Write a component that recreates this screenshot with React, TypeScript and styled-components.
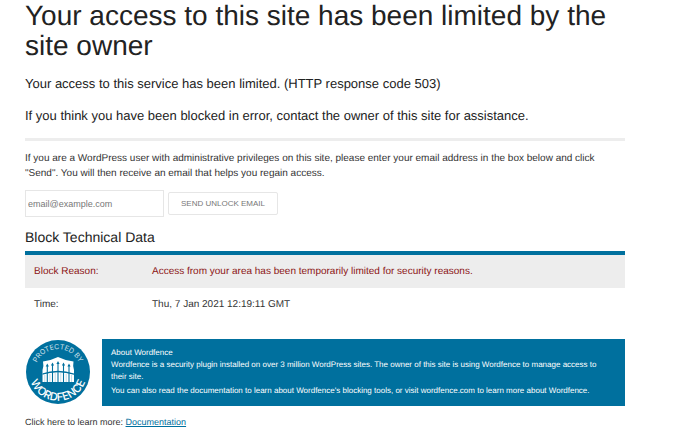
import React from "react";
import styled, { createGlobalStyle } from "styled-components";

const GlobalStyle = createGlobalStyle`
  *, *::before, *::after { box-sizing: border-box; }
  body {
    margin: 0;
    background: #fff;
    color: #333;
    font-family: "Liberation Sans", Arial, Helvetica, sans-serif;
    font-size: 10px;
    line-height: 15px;
    text-rendering: geometricPrecision;
  }
`;

const Page = styled.main`
  max-width: 650px;
  padding: 1px 25px 0;
`;

const Title = styled.h1`
  margin: 0;
  color: #222;
  font-size: 28px;
  font-weight: 400;
  line-height: 30px;
`;

const Lead = styled.p`
  margin: 14px 0 0;
  color: #222;
  font-size: 13px;
  line-height: 18px;
`;

const Divider = styled.hr`
  height: 3px;
  margin: 13px 0 10px;
  border: 0;
  background: #ededed;
`;

const Copy = styled.p`
  margin: 0;
`;

const UnlockForm = styled.form`
  display: flex;
  align-items: center;
  gap: 4px;
  margin-top: 9px;
`;

const EmailInput = styled.input`
  width: 139px;
  height: 27px;
  padding: 0 2px;
  border: 1px solid #e6e6e6;
  background: #fff;
  color: #333;
  font: inherit;
  font-size: 9px;
  &::placeholder { color: #777; opacity: 1; }
`;

const SendButton = styled.button`
  height: 23px;
  padding: 0 12px;
  border: 1px solid #e6e6e6;
  border-radius: 2px;
  background: #fff;
  color: #777;
  font: inherit;
  font-size: 8px;
  text-transform: uppercase;
`;

const SectionTitle = styled.h2`
  margin: 11px 0 5px;
  color: #222;
  font-size: 14px;
  font-weight: 400;
  line-height: 18px;
`;

const DataTable = styled.table`
  width: 100%;
  border-top: 4px solid #00709e;
  border-collapse: collapse;
`;

const DataRow = styled.tr<{ $alert?: boolean }>`
  background: ${(p) => (p.$alert ? "#ededed" : "#fff")};
  color: ${(p) => (p.$alert ? "#8c1515" : "#333")};
  th, td {
    padding: 9px;
    font-weight: 400;
    text-align: left;
  }
  th { width: 118px; }
`;

const About = styled.section`
  display: flex;
  align-items: flex-start;
  gap: 11px;
  margin-top: 18px;
`;

const Seal = styled.svg`
  flex: none;
  width: 66px;
  height: 66px;
`;

const AboutPanel = styled.div`
  flex: 1;
  padding: 8px 16px 7px 9px;
  background: #00709e;
  color: #fff;
  font-size: 8px;
  line-height: 12px;
`;

const AboutTitle = styled.h3`
  margin: 0;
  font-size: 8px;
  font-weight: 400;
`;

const AboutText = styled.p`
  margin: 0 0 2px;
`;

const Footer = styled.p`
  margin: 9px 0 0;
  font-size: 9px;
  a { color: #00709e; }
`;

function WordfenceSeal() {
  return (
    <Seal viewBox="0 0 66 66" role="img" aria-label="Protected by Wordfence">
      <defs>
        <path id="seal-top" d="M 13 44.4 A 23 23 0 1 1 53 44.4" />
        <path id="seal-bottom" d="M 5.1 25 A 29 29 0 1 0 60.9 25" />
        <clipPath id="gate">
          <path d="M18 22.5 Q26 21.5 33 18 Q40 21.5 48.5 22.5 Q47.6 27 49 31 V43 H17.5 V31 Q19 27 18 22.5Z" />
        </clipPath>
      </defs>
      <circle cx="33" cy="33" r="32" fill="#00709e" />
      <g clipPath="url(#gate)">
        <rect x="16" y="17" width="34" height="28" fill="#fff" />
        <g stroke="#00709e" fill="none">
          <path d="M16 35.5 Q33 29.5 50 35.5" strokeWidth="1.3" />
          <path d="M22.3 27V45M27.5 26V45M33 24V45M38.5 26V45M44 27V45" strokeWidth="1.1" />
          <path d="M19.8 36V45M24.9 35V45M30.2 34V45M35.8 34V45M41.2 35V45M46.5 36V45" strokeWidth="0.7" opacity="0.35" />
        </g>
        <g fill="#00709e">
          <path d="M22.3 24.5l1.6 3h-3.2zM27.5 23.5l1.6 3h-3.2zM33 22l1.6 3h-3.2zM38.5 23.5l1.6 3h-3.2zM44 24.5l1.6 3h-3.2z" />
        </g>
      </g>
      <g fill="#fff" fontFamily="Inter, sans-serif" textAnchor="middle">
        <text fontSize="7" opacity="0.8">
          <textPath href="#seal-top" startOffset="50%">PROTECTED BY</textPath>
        </text>
        <text fontSize="11" fontWeight="500">
          <textPath href="#seal-bottom" startOffset="50%">WORDFENCE</textPath>
        </text>
      </g>
    </Seal>
  );
}

export default function App() {
  return (
    <>
      <GlobalStyle />
      <Page>
        <Title>Your access to this site has been limited by the site owner</Title>
        <Lead>Your access to this service has been limited. (HTTP response code 503)</Lead>
        <Lead>If you think you have been blocked in error, contact the owner of this site for assistance.</Lead>
        <Divider />
        <Copy>
          If you are a WordPress user with administrative privileges on this site, please enter your
          email address in the box below and click "Send". You will then receive an email that helps
          you regain access.
        </Copy>
        <UnlockForm onSubmit={(e) => e.preventDefault()}>
          <EmailInput type="email" aria-label="Email address" placeholder="email@example.com" />
          <SendButton type="submit">Send Unlock Email</SendButton>
        </UnlockForm>
        <SectionTitle>Block Technical Data</SectionTitle>
        <DataTable>
          <tbody>
            <DataRow $alert>
              <th scope="row">Block Reason:</th>
              <td>Access from your area has been temporarily limited for security reasons.</td>
            </DataRow>
            <DataRow>
              <th scope="row">Time:</th>
              <td>Thu, 7 Jan 2021 12:19:11 GMT</td>
            </DataRow>
          </tbody>
        </DataTable>
        <About>
          <WordfenceSeal />
          <AboutPanel>
            <AboutTitle>About Wordfence</AboutTitle>
            <AboutText>
              Wordfence is a security plugin installed on over 3 million WordPress sites. The owner of
              this site is using Wordfence to manage access to their site.
            </AboutText>
            <AboutText>
              You can also read the documentation to learn about Wordfence's blocking tools, or visit
              wordfence.com to learn more about Wordfence.
            </AboutText>
          </AboutPanel>
        </About>
        <Footer>
          Click here to learn more: <a href="#documentation">Documentation</a>
        </Footer>
      </Page>
    </>
  );
}
